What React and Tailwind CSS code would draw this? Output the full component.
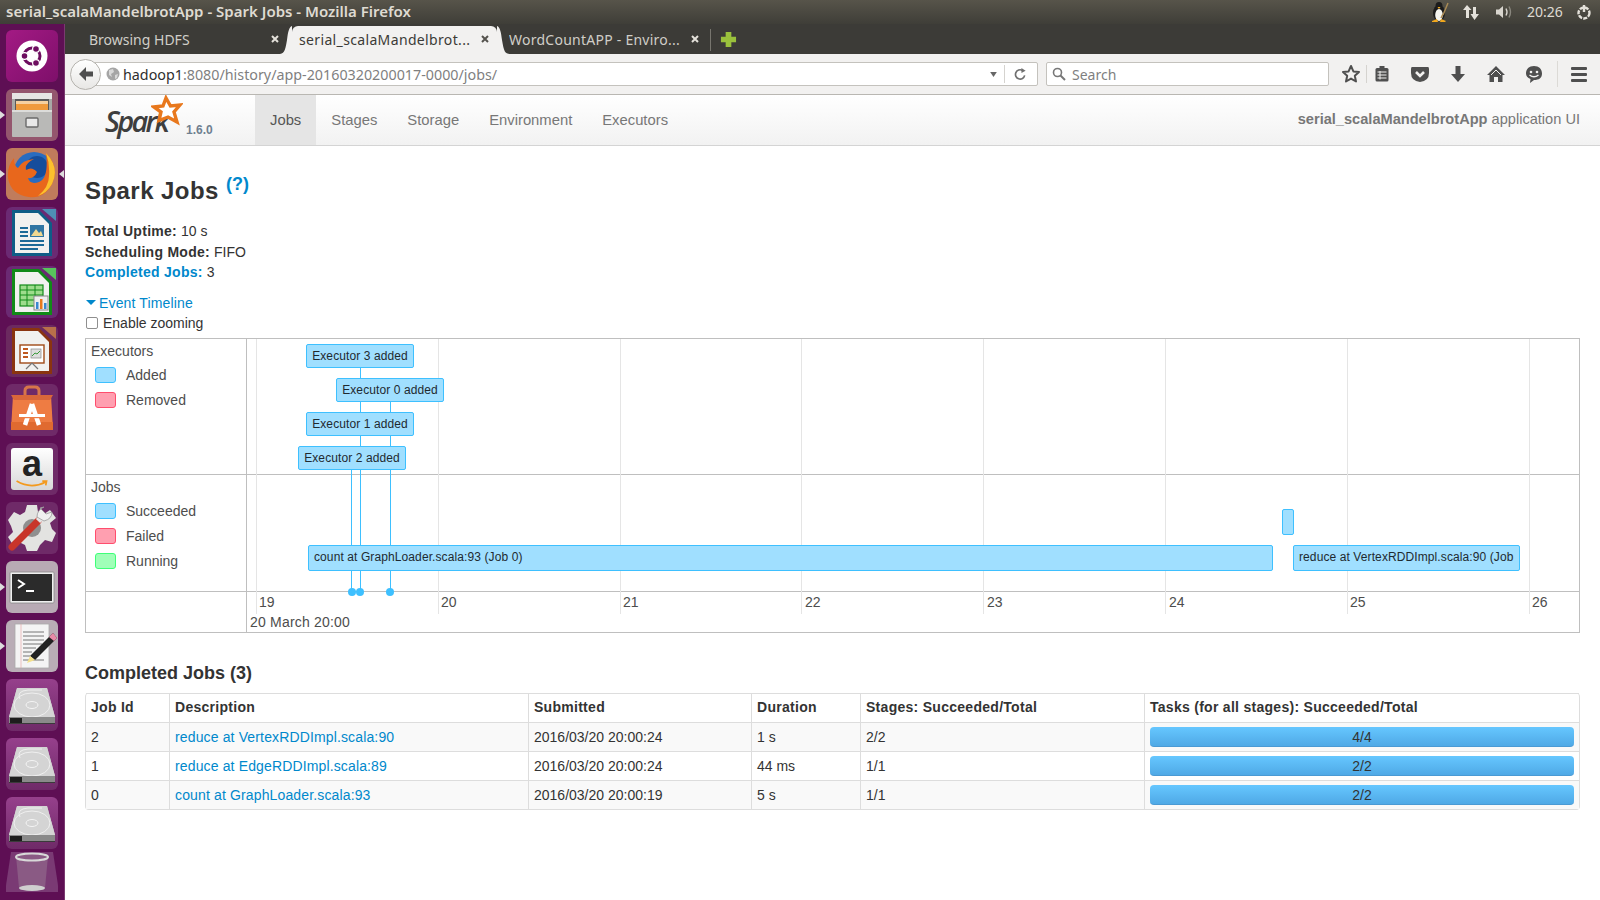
import React from "react";

const HDD = () => (
  <svg viewBox="0 0 52 52" className="w-[52px] h-[52px]">
    <path d="M11 9 L41 9 L49 38 L49 44 L3 44 L3 38 Z" fill="#cfcfcf" />
    <path d="M11 9 L41 9 L49 38 L3 38 Z" fill="#d4d4d4" />
    <ellipse cx="26" cy="26" rx="18" ry="12" fill="none" stroke="#efefef" strokeWidth="1" />
    <ellipse cx="26" cy="26" rx="6" ry="3.5" fill="none" stroke="#f4f4f4" strokeWidth="1" />
    <path d="M14 20 Q10 12 22 11 L36 11" fill="none" stroke="#efefef" strokeWidth="1" />
    <path d="M3 38 L49 38 L49 44 L3 44 Z" fill="#8a8a8a" />
    <rect x="4" y="39" width="12" height="5" fill="#1d1d1d" />
    <rect x="3" y="44" width="46" height="1" fill="#3a3a3a" />
  </svg>
);

const Tile = ({ className, children }) => (
  <div className={`w-[52px] h-[52px] rounded-[6px] overflow-hidden ${className}`}>{children}</div>
);

const Pip = () => (
  <svg viewBox="0 0 5 8" className="w-[5px] h-[8px]"><path d="M0 0 L5 4 L0 8 Z" fill="#ddd" /></svg>
);

const LauncherItem = ({ tile, left, right, children }) => (
  <div className="flex items-center h-[52px] mb-[7px]">
    <div className="w-[6px] shrink-0">{left && <Pip />}</div>
    <Tile className={tile}>{children}</Tile>
    {right && (
      <svg viewBox="0 0 5 8" className="w-[5px] h-[8px] ml-[1px]"><path d="M5 0 L0 4 L5 8 Z" fill="#ddd" /></svg>
    )}
  </div>
);

const Launcher = () => (
  <div className="w-[65px] shrink-0 bg-[#5e0f54] border-r border-[#7a3a70] pt-[6px] overflow-hidden">
    <LauncherItem tile="bg-gradient-to-br from-[#a31a84] to-[#7e0f6a]">
      <svg viewBox="0 0 52 52" className="w-full h-full">
        <circle cx="26" cy="26" r="15.5" fill="#fff" />
        <circle cx="26" cy="26" r="8" fill="none" stroke="#6d0d5f" strokeWidth="3" />
        <circle cx="18.5" cy="26" r="3.4" fill="#6d0d5f" stroke="#fff" strokeWidth="1.2" />
        <circle cx="30" cy="19" r="3.4" fill="#6d0d5f" stroke="#fff" strokeWidth="1.2" />
        <circle cx="30" cy="33" r="3.4" fill="#6d0d5f" stroke="#fff" strokeWidth="1.2" />
      </svg>
    </LauncherItem>
    <LauncherItem tile="bg-[#94566e]" left>
      <svg viewBox="0 0 52 52" className="w-full h-full">
        <rect x="6" y="4" width="40" height="44" rx="2" fill="#a8a8a6" />
        <rect x="6" y="4" width="40" height="6" fill="#e6e6e4" />
        <rect x="9" y="10" width="34" height="12" fill="#5a5a5a" />
        <rect x="10" y="12" width="32" height="3" fill="#f5d0a0" />
        <rect x="10" y="15" width="32" height="6" fill="#ef9a3c" />
        <rect x="6" y="21" width="40" height="27" rx="1" fill="#b9b9b7" />
        <rect x="6" y="21" width="40" height="2" fill="#dcdcda" />
        <rect x="20" y="29" width="12" height="9" rx="1" fill="#e8e8e8" stroke="#6a6a6a" strokeWidth="1.4" />
      </svg>
    </LauncherItem>
    <LauncherItem tile="bg-[#c07c5c]" left right>
      <svg viewBox="0 0 52 52" className="w-full h-full">
        <circle cx="28" cy="24" r="20" fill="#2a6cc0" />
        <circle cx="31" cy="19" r="11" fill="#164d9c" />
        <path d="M40 5 Q54 20 46 36 Q38 51 23 49 Q5 47 2 30 Q1 18 8 10 Q8 18 12 20 Q16 12 28 11 Q18 16 20 22 Q26 18 31 24 Q28 31 22 30 Q24 37 33 34 Q43 30 40 5 Z" fill="#e8671c" />
        <path d="M40 5 Q54 20 46 36 Q41 45 32 48 Q43 39 43 28 Q44 16 40 5 Z" fill="#fbc02d" />
      </svg>
    </LauncherItem>
    <LauncherItem tile="bg-[#6b2a73]">
      <svg viewBox="0 0 52 52" className="w-full h-full">
        <path d="M6 3 L33 3 L46 16 L46 49 L6 49 Z" fill="#0f5d87" />
        <path d="M9 6 L32 6 L43 17 L43 46 L9 46 Z" fill="#f1f1ef" />
        <path d="M36 2 L50 2 L50 14 Z" fill="#4e8fb5" />
        <rect x="14" y="20" width="8" height="2" fill="#1c6a97" />
        <rect x="14" y="24" width="8" height="2" fill="#1c6a97" />
        <rect x="14" y="28" width="8" height="2" fill="#1c6a97" />
        <rect x="24" y="18" width="14" height="12" fill="#2f75a3" />
        <path d="M25 29 L30 22 L33 26 L35 24 L37 29 Z" fill="#f0d890" />
        <rect x="14" y="33" width="24" height="2" fill="#1c6a97" />
        <rect x="14" y="37" width="24" height="2" fill="#1c6a97" />
        <rect x="14" y="41" width="18" height="2" fill="#1c6a97" />
      </svg>
    </LauncherItem>
    <LauncherItem tile="bg-[#6b2a73]">
      <svg viewBox="0 0 52 52" className="w-full h-full">
        <path d="M6 3 L33 3 L46 16 L46 49 L6 49 Z" fill="#118a18" />
        <path d="M9 6 L32 6 L43 17 L43 46 L9 46 Z" fill="#f1f1ef" />
        <path d="M36 2 L50 2 L50 14 Z" fill="#58c45c" />
        <rect x="14" y="19" width="23" height="21" fill="#9ddc8c" stroke="#118a18" strokeWidth="1.2" />
        <path d="M14 24 H37 M14 29 H37 M14 34 H37 M21 19 V40 M29 19 V40" stroke="#118a18" strokeWidth="1" />
        <rect x="28" y="30" width="14" height="14" fill="#eee" stroke="#888" strokeWidth="1" />
        <rect x="30" y="36" width="2.5" height="7" fill="#3a87d0" />
        <rect x="34" y="33" width="2.5" height="10" fill="#e8781d" />
        <rect x="38" y="37" width="2.5" height="6" fill="#3a87d0" />
      </svg>
    </LauncherItem>
    <LauncherItem tile="bg-[#6b2a5f]">
      <svg viewBox="0 0 52 52" className="w-full h-full">
        <path d="M6 3 L33 3 L46 16 L46 49 L6 49 Z" fill="#8a3410" />
        <path d="M9 6 L32 6 L43 17 L43 46 L9 46 Z" fill="#f1f1ef" />
        <path d="M36 2 L50 2 L50 14 Z" fill="#b8704a" />
        <rect x="14" y="20" width="24" height="18" fill="#fff" stroke="#a04a18" strokeWidth="1.4" />
        <path d="M17 24 H22 M17 28 H22 M17 32 H22" stroke="#c05a20" strokeWidth="2" />
        <rect x="25" y="24" width="10" height="9" fill="#ddd" stroke="#888" strokeWidth="0.7" />
        <path d="M26 31 L29 28 L31 29 L34 26" stroke="#3a9a3a" strokeWidth="1" fill="none" />
        <path d="M26 38 L20 44 M26 38 L32 44" stroke="#777" strokeWidth="1.2" />
      </svg>
    </LauncherItem>
    <LauncherItem tile="bg-[#6f2a68]">
      <svg viewBox="0 0 52 52" className="w-full h-full">
        <path d="M19 13 V7 Q19 3 23 3 H29 Q33 3 33 7 V13" fill="none" stroke="#d6754a" strokeWidth="3" />
        <path d="M7 11 L45 11 L47 46 L5 46 Z" fill="#ee7c43" />
        <path d="M5 11 H47 L44 16 H8 Z" fill="#d9673a" />
        <path d="M5 38 L47 38 L47 46 L5 46 Z" fill="#e06a30" />
        <path d="M26 20 L19 41 M26 20 L33 41" stroke="#fff" strokeWidth="4.5" />
        <rect x="13" y="30" width="26" height="3" fill="#fff" />
        <rect x="13" y="33" width="26" height="1.2" fill="#ee7c43" />
      </svg>
    </LauncherItem>
    <LauncherItem tile="bg-[#6f2a68]">
      <div className="w-[42px] h-[42px] mx-auto mt-[5px] rounded-[3px] bg-gradient-to-b from-[#fff] to-[#d8d8d8] flex flex-col items-center">
        <span className="font-['Liberation_Sans',sans-serif] font-bold text-[36px] leading-[32px] text-[#222]">a</span>
        <svg viewBox="0 0 42 10" className="w-[36px] h-[9px]"><path d="M3 1 Q20 11 37 2 M33 1 L38 1 L37 6" fill="none" stroke="#f39a1f" strokeWidth="2" /></svg>
      </div>
    </LauncherItem>
    <LauncherItem tile="bg-[#6f2a68]">
      <svg viewBox="0 0 52 52" className="w-full h-full">
        <path d="M21 3 H31 L32 10 L38 12 L44 8 L50 16 L44 21 L46 27 L50 31 L46 40 L39 38 L34 43 L31 49 H21 L19 43 L13 40 L7 43 L2 35 L7 30 L5 24 L2 18 L8 10 L14 13 L19 10 Z" fill="#e3e3e1" />
        <circle cx="26" cy="26" r="9" fill="#8f8f8f" />
        <path d="M6 45 L32 19" stroke="#c8352a" strokeWidth="7" strokeLinecap="round" />
        <path d="M32 19 L37 14" stroke="#e6e6e6" strokeWidth="6" />
        <path d="M34 6 L40 12 L46 10 Q46 17 38 19 L31 15 Q31 8 38 5 Z" fill="#f0f0f0" stroke="#9a9a9a" strokeWidth="0.8" />
      </svg>
    </LauncherItem>
    <LauncherItem tile="bg-[#b8aab4]" left>
      <svg viewBox="0 0 52 52" className="w-full h-full">
        <rect x="4" y="11" width="44" height="31" rx="1" fill="#efefef" />
        <rect x="4" y="11" width="44" height="31" rx="1" fill="none" stroke="#888" strokeWidth="0.8" />
        <rect x="6" y="13" width="40" height="27" fill="#2b2b2b" />
        <path d="M12 19 L18 23 L12 27" fill="none" stroke="#fff" strokeWidth="2" />
        <rect x="20" y="29" width="8" height="2" fill="#fff" />
      </svg>
    </LauncherItem>
    <LauncherItem tile="bg-[#b9adb6]" left>
      <svg viewBox="0 0 52 52" className="w-full h-full">
        <rect x="9" y="4" width="34" height="44" fill="#f4f4f4" stroke="#aaa" strokeWidth="0.8" />
        <path d="M15 4 V48" stroke="#e8a0a0" strokeWidth="0.6" />
        <path d="M17 12 H38 M17 16 H38 M17 20 H38 M17 24 H36 M17 28 H30 M17 32 H26 M17 36 H24 M17 40 H38" stroke="#666" strokeWidth="0.9" />
        <path d="M47 13 L51 18 L29 40 L24 36 Z" fill="#222" />
        <path d="M47 13 L51 18 L48 21 L43 17 Z" fill="#e88aa8" />
        <path d="M24 36 L29 40 L21 43 Z" fill="#f4e08a" />
      </svg>
    </LauncherItem>
    <LauncherItem tile="bg-gradient-to-b from-[#96408c] to-[#6f2a68]"><HDD /></LauncherItem>
    <LauncherItem tile="bg-gradient-to-b from-[#96408c] to-[#6f2a68]"><HDD /></LauncherItem>
    <LauncherItem tile="bg-gradient-to-b from-[#96408c] to-[#6f2a68]"><HDD /></LauncherItem>
    <div className="flex ml-[6px] -mt-[4px]">
      <svg viewBox="0 0 52 46" className="w-[52px] h-[46px]">
        <path d="M5 0 H47 L53 40 H-1 Z" fill="#7a3a74" />
        <path d="M10 4 H42 L39 36 H13 Z" fill="#8a5a84" />
        <ellipse cx="26" cy="5" rx="16" ry="3.5" fill="#8a5a84" stroke="#d8d8d8" strokeWidth="2" />
        <ellipse cx="26" cy="36" rx="13" ry="3" fill="#cfcfcf" />
      </svg>
    </div>
  </div>
);

const TitleBar = () => (
  <div className="h-6 shrink-0 flex items-center bg-gradient-to-b from-[#57544a] to-[#3f3e38] pl-[6px] text-[#dfdbd2]">
    <span className="font-['Noto_Sans',sans-serif] font-semibold text-[15px] leading-[22px] pb-[2px] flex-1">serial_scalaMandelbrotApp - Spark Jobs - Mozilla Firefox</span>
    <svg viewBox="0 0 20 22" className="w-5 h-[22px] mr-[12px]">
      <ellipse cx="9" cy="12" rx="6" ry="8" fill="#1c1c1c" />
      <ellipse cx="9" cy="5" rx="3.5" ry="4" fill="#1c1c1c" />
      <ellipse cx="9" cy="14" rx="3.8" ry="6" fill="#f5f5f0" />
      <path d="M2 20 L7 18 L8 21 L2 21 Z M11 18 L16 20 L15 21 L10 21 Z" fill="#f2a81d" />
      <path d="M7.5 6 L10.5 6 L9 8 Z" fill="#f2a81d" />
      <path d="M18 2 L13 14 M11 17 L13 13" stroke="#a98a55" strokeWidth="1.5" />
    </svg>
    <svg viewBox="0 0 18 18" className="w-[18px] h-[18px] mr-[15px]">
      <path d="M5 2 L1 7 H4 V15 H7 V7 H9.5 Z" fill="#e4e1da" />
      <path d="M12.5 17 L17 11 H14 V4 H11 V11 H8.5 Z" fill="#e4e1da" />
    </svg>
    <svg viewBox="0 0 20 18" className="w-5 h-[18px] mr-[12px]">
      <path d="M1 6.5 H4 L8 3 V15 L4 11.5 H1 Z" fill="#d8d5ce" />
      <path d="M11 5.5 Q13 9 11 12.5" fill="none" stroke="#d8d5ce" strokeWidth="1.4" />
      <path d="M14 3.5 Q17 9 14 14.5" fill="none" stroke="#8a887f" strokeWidth="1.4" />
    </svg>
    <span className="font-['Noto_Sans',sans-serif] text-[14px] leading-6 w-[36px] text-[#dfdbd2] mr-[12px]">20:26</span>
    <svg viewBox="0 0 18 18" className="w-[18px] h-[18px] mr-[7px]">
      <circle cx="9" cy="10" r="5.5" fill="none" stroke="#e4e1da" strokeWidth="2.4" strokeDasharray="4 1.2" />
      <path d="M9 2 V9" stroke="#e4e1da" strokeWidth="2.4" />
    </svg>
  </div>
);

const X = ({ className }) => (
  <svg viewBox="0 0 10 10" className={`w-[10px] h-[10px] ${className}`}><path d="M2 2 L8 8 M8 2 L2 8" stroke="currentColor" strokeWidth="2" /></svg>
);

const TabBar = () => (
  <div className="h-[30px] shrink-0 bg-[#3c3b37] flex items-end font-['Noto_Sans',sans-serif] text-[14px]">
    <div className="w-[227px] h-[28px] flex items-center pl-6 pr-[12px] pb-[2px] text-[#d0cec8]">
      <span className="flex-1">Browsing HDFS</span>
      <X className="text-[#e4e1da]" />
    </div>
    <div className="w-[205px] h-[28px] flex items-center pl-[7px] pr-[7px] pb-[2px] text-[#3c3b37] bg-[#f2f1f0] rounded-t-[6px] relative">
      <svg viewBox="0 0 14 28" className="absolute -left-[14px] bottom-0 w-[14px] h-[28px]">
        <path d="M14 0 V28 H0 C6 28 7 26 9 14 C10 6 11 1 14 0 Z" fill="#f2f1f0" />
      </svg>
      <svg viewBox="0 0 14 28" className="absolute -right-[14px] bottom-0 w-[14px] h-[28px]">
        <path d="M0 0 V28 H14 C8 28 7 26 5 14 C4 6 3 1 0 0 Z" fill="#f2f1f0" />
      </svg>
      <span className="flex-1 whitespace-nowrap overflow-hidden tracking-[0.35px]">serial_scalaMandelbrot...</span>
      <X className="text-[#55534e]" />
    </div>
    <div className="w-[213px] h-[28px] flex items-center pl-[12px] pr-[10px] pb-[2px] text-[#d0cec8]">
      <span className="flex-1 whitespace-nowrap overflow-hidden tracking-[0.25px]">WordCountAPP - Enviro...</span>
      <X className="text-[#e4e1da]" />
    </div>
    <div className="w-px h-[22px] bg-[#77756e] mb-[3px]" />
    <svg viewBox="0 0 18 18" className="w-[17px] h-[17px] ml-[9px] mb-[6px]">
      <path d="M6 1 H12 V6 H17 V12 H12 V17 H6 V12 H1 V6 H6 Z" fill="#9ac13c" />
    </svg>
  </div>
);

const G = ({ d, w = "w-[38px]", children }) => (
  <div className={`${w} h-6 flex items-center justify-center`}>
    <svg viewBox="0 0 20 20" className="w-5 h-5">{children || <path d={d} fill="#4f4f4f" />}</svg>
  </div>
);

const Toolbar = () => (
  <div className="h-[41px] shrink-0 bg-[#f2f1f0] border-b border-[#b9b7b2] flex items-center pl-[5px] font-['Noto_Sans',sans-serif] text-[14px]">
    <div className="w-[31px] h-[31px] shrink-0 rounded-full border border-[#b5b3ae] bg-gradient-to-b from-[#fff] to-[#e8e7e5] flex items-center justify-center z-10">
      <svg viewBox="0 0 18 18" className="w-[18px] h-[18px]"><path d="M2 9 L9 2 L9 6.5 H16 V11.5 H9 V16 Z" fill="#4f4f4f" /></svg>
    </div>
    <div className="w-[953px] -ml-[16px] h-6 shrink-0 bg-white border border-[#c4c2bd] rounded-[2px] flex items-center pl-[20px] pr-[8px]">
      <svg viewBox="0 0 14 14" className="w-[14px] h-[14px] mr-[3px]">
        <circle cx="7" cy="7" r="6.5" fill="#a5a5a5" />
        <path d="M3 3 L7 2 L8 5 L5 7 L6 10 L3 8 Z M9 8 L12 7 L11 11 L9 12 Z" fill="#d8d8d8" />
      </svg>
      <span className="flex-1 text-[14.3px] pt-[1px] whitespace-nowrap text-[#2e2e2e]">hadoop1<span className="text-[#7f7f7f]">:8080/history/app-20160320200017-0000/jobs/</span></span>
      <svg viewBox="0 0 8 6" className="w-[7px] h-[5px] mr-[7px]"><path d="M0 0 H8 L4 6 Z" fill="#666" /></svg>
      <div className="w-px h-[18px] bg-[#d5d3cf] mr-[9px]" />
      <svg viewBox="0 0 14 14" className="w-[13px] h-[13px] mr-[2px]">
        <path d="M11.5 8 A5 5 0 1 1 9 2.5" fill="none" stroke="#6f6f6f" strokeWidth="1.8" />
        <path d="M8 0 L12.5 3 L8 5.5 Z" fill="#6f6f6f" />
      </svg>
    </div>
    <div className="w-[283px] ml-[8px] h-6 shrink-0 bg-white border border-[#c4c2bd] rounded-[2px] flex items-center pl-[5px] text-[#7f7f7f]">
      <svg viewBox="0 0 14 14" className="w-[14px] h-[14px] mr-[6px]">
        <circle cx="5.5" cy="5.5" r="4" fill="none" stroke="#777" strokeWidth="1.6" />
        <path d="M8.5 8.5 L13 13" stroke="#777" strokeWidth="2" />
      </svg>
      <span>Search</span>
    </div>
    <div className="ml-[7px] flex items-center">
      <G w="w-[30px]">
        <path d="M10 2 L12.4 7.4 L18 8 L13.8 11.8 L15 17.5 L10 14.6 L5 17.5 L6.2 11.8 L2 8 L7.6 7.4 Z" fill="none" stroke="#4f4f4f" strokeWidth="2" strokeLinejoin="round" />
      </G>
      <div className="w-px h-[18px] bg-[#d5d3cf]" />
      <G w="w-[30px]">
        <rect x="3.5" y="4" width="13" height="13.5" rx="1.5" fill="#4f4f4f" />
        <rect x="7.5" y="2" width="5" height="3.5" fill="#4f4f4f" />
        <path d="M5.5 8 H14.5 M5.5 11 H14.5 M5.5 14 H14.5 M8 7 V15.5" stroke="#f2f1f0" strokeWidth="1" />
      </G>
      <div className="w-1" />
      <G>
        <path d="M2 3 H18 Q19 3 19 5 V9 Q19 17 10 18 Q1 17 1 9 V5 Q1 3 2 3 Z" fill="#4f4f4f" />
        <path d="M6 8 L10 12 L14 8" fill="none" stroke="#f2f1f0" strokeWidth="2.6" />
      </G>
      <G d="M7.5 2 H12.5 V10 H17 L10 18 L3 10 H7.5 Z" />
      <G>
        <path d="M10 2 L19 11 H16.5 V18 H12 V13 H8 V18 H3.5 V11 H1 Z" fill="#4f4f4f" />
        <path d="M10 6 L15 11" stroke="#f2f1f0" strokeWidth="1" />
        <path d="M10 6 L5 11" stroke="#f2f1f0" strokeWidth="1" />
      </G>
      <G>
        <path d="M10 2 C15 2 18 5 18 9.5 C18 14 15 16 10 16 L6 19 L6.5 15 C3.5 14 2 12 2 9.5 C2 5 5 2 10 2 Z" fill="#4f4f4f" />
        <circle cx="7" cy="8" r="1.3" fill="#f2f1f0" />
        <circle cx="13" cy="8" r="1.3" fill="#f2f1f0" />
        <path d="M5.5 11 Q10 14.5 14.5 11" fill="none" stroke="#f2f1f0" strokeWidth="1.4" />
      </G>
      <div className="w-1" />
      <div className="w-px h-[26px] bg-[#dcdad6]" />
      <div className="w-[42px] flex flex-col items-center gap-[3px]">
        <div className="w-4 h-[3px] bg-[#4f4f4f] rounded-[1px]" />
        <div className="w-4 h-[3px] bg-[#4f4f4f] rounded-[1px]" />
        <div className="w-4 h-[3px] bg-[#4f4f4f] rounded-[1px]" />
      </div>
    </div>
  </div>
);

const NavBar = () => (
  <div className="h-[51px] shrink-0 bg-gradient-to-b from-[#ffffff] to-[#f2f2f2] border-b border-[#d4d4d4] flex items-stretch text-[14.8px] text-[#777]">
    <div className="w-[190px] pl-[40px] flex items-end pb-[6px] relative">
      <span className="font-['Open_Sans',sans-serif] italic font-semibold text-[#3e3e3e] text-[29px] leading-[36px] tracking-[-2.8px]">Spark</span>
      <svg viewBox="0 0 32 32" className="absolute left-[86px] top-0 w-8 h-8">
        <path d="M15 3 L19.5 11 L29 10 L23 17 L26 27 L17 22 L8 25.5 L10 17 L3 12 L12 11 Z" fill="#fff" stroke="#e8781d" strokeWidth="3.4" />
      </svg>
      <span className="ml-[19px] font-bold text-[12px] leading-[18px] text-[#6f7f90]">1.6.0</span>
    </div>
    <div className="flex items-center px-[15px] bg-[#e5e5e5] text-[#555]">Jobs</div>
    <div className="flex items-center px-[15px]">Stages</div>
    <div className="flex items-center px-[15px]">Storage</div>
    <div className="flex items-center px-[15px]">Environment</div>
    <div className="flex items-center px-[15px]">Executors</div>
    <div className="flex-1" />
    <div className="flex items-center pr-[20px] text-[14.6px]"><b>serial_scalaMandelbrotApp</b>&nbsp;application UI</div>
  </div>
);

const Legend = ({ title, items }) => (
  <div className="pt-[2px] pl-[5px]">
    <div className="leading-[20px]">{title}</div>
    <div className="mt-[6px] flex flex-col gap-[9px]">
      {items.map(([label, cls]) => (
        <div key={label} className="flex items-center h-4 pl-[4px]">
          <div className={`w-[21px] h-[16px] rounded-[3px] border ${cls}`} />
          <span className="ml-[10px] pt-[2px]">{label}</span>
        </div>
      ))}
    </div>
  </div>
);

const exec = "absolute w-[108px] h-6 bg-[#a0dfff] border border-[#3ec0ff] rounded-[2px] text-[12px] leading-[22px] tracking-[0.1px] text-center text-[#1f2a30] whitespace-nowrap";
const job = "absolute top-[206px] h-[26px] bg-[#a0dfff] border border-[#3ec0ff] rounded-[2px] text-[12px] leading-[23px] tracking-[0.1px] pl-[5px] text-[#1f2a30] whitespace-nowrap overflow-hidden";
const grid = "absolute top-0 w-px h-[275px] bg-[#e5e5e5]";
const tick = "absolute top-[253px] leading-[20px]";
const evline = "absolute w-px bg-[#3ec0ff]";
const dot = "absolute top-[249px] w-2 h-2 rounded-full bg-[#3ec0ff]";

const Timeline = () => (
  <div className="mt-[5px] h-[295px] border border-[#bfbfbf] relative grid grid-cols-[161px_1fr] grid-rows-[136px_117px_1fr] text-[14px] text-[#4d4d4d] overflow-hidden">
    <div className="border-r border-b border-[#bfbfbf]">
      <Legend title="Executors" items={[["Added", "bg-[#a0dfff] border-[#3ec0ff]"], ["Removed", "bg-[#ff9fb0] border-[#ff4d6d]"]]} />
    </div>
    <div className="border-b border-[#bfbfbf]" />
    <div className="border-r border-b border-[#bfbfbf]">
      <Legend title="Jobs" items={[["Succeeded", "bg-[#a0dfff] border-[#3ec0ff]"], ["Failed", "bg-[#ff9fb0] border-[#ff4d6d]"], ["Running", "bg-[#a0ffb8] border-[#3eff78]"]]} />
    </div>
    <div className="border-b border-[#bfbfbf]" />
    <div className="border-r border-[#bfbfbf]" />
    <div />

    <div className={`${grid} left-[170px]`} />
    <div className={`${grid} left-[352px]`} />
    <div className={`${grid} left-[534px]`} />
    <div className={`${grid} left-[715px]`} />
    <div className={`${grid} left-[897px]`} />
    <div className={`${grid} left-[1079px]`} />
    <div className={`${grid} left-[1261px]`} />
    <div className={`${grid} left-[1443px]`} />

    <div className={`${tick} left-[173px]`}>19</div>
    <div className={`${tick} left-[355px]`}>20</div>
    <div className={`${tick} left-[537px]`}>21</div>
    <div className={`${tick} left-[719px]`}>22</div>
    <div className={`${tick} left-[901px]`}>23</div>
    <div className={`${tick} left-[1083px]`}>24</div>
    <div className={`${tick} left-[1264px]`}>25</div>
    <div className={`${tick} left-[1446px]`}>26</div>
    <div className="absolute left-[164px] top-[273px] leading-[20px] tracking-[0.2px]">20 March 20:00</div>

    <div className={`${evline} left-[274px] top-[29px] h-[224px]`} />
    <div className={`${evline} left-[304px] top-[63px] h-[190px]`} />
    <div className={`${evline} left-[265px] top-[131px] h-[122px]`} />
    <div className={`${dot} left-[262px]`} />
    <div className={`${dot} left-[270px]`} />
    <div className={`${dot} left-[300px]`} />

    <div className={`${exec} left-[220px] top-[5px]`}>Executor 3 added</div>
    <div className={`${exec} left-[250px] top-[39px]`}>Executor 0 added</div>
    <div className={`${exec} left-[220px] top-[73px]`}>Executor 1 added</div>
    <div className={`${exec} left-[212px] top-[107px]`}>Executor 2 added</div>

    <div className={`${job} left-[222px] w-[965px]`}>count at GraphLoader.scala:93 (Job 0)</div>
    <div className="absolute left-[1196px] top-[170px] w-3 h-[26px] bg-[#a0dfff] border border-[#3ec0ff] rounded-[2px]" />
    <div className={`${job} left-[1207px] w-[227px]`}>reduce at VertexRDDImpl.scala:90 (Job</div>
  </div>
);

const rows = [
  ["2", "reduce at VertexRDDImpl.scala:90", "2016/03/20 20:00:24", "1 s", "2/2", "4/4", "bg-[#f9f9f9]"],
  ["1", "reduce at EdgeRDDImpl.scala:89", "2016/03/20 20:00:24", "44 ms", "1/1", "2/2", "bg-white"],
  ["0", "count at GraphLoader.scala:93", "2016/03/20 20:00:19", "5 s", "1/1", "2/2", "bg-[#f9f9f9]"],
];

const td = "h-[29px] px-[5px] py-0 border-t border-l border-[#ddd] text-left align-middle first:border-l-0";
const tc = `${td} pt-[2px]`;

const JobsTable = () => (
  <table className="w-full table-fixed border-separate border-spacing-0 border-x border-b border-[#ddd] rounded-[4px] text-[14px] text-[#333]">
    <colgroup>
      <col className="w-[83px]" />
      <col className="w-[359px]" />
      <col className="w-[223px]" />
      <col className="w-[109px]" />
      <col className="w-[284px]" />
      <col />
    </colgroup>
    <thead>
      <tr>
        {["Job Id", "Description", "Submitted", "Duration", "Stages: Succeeded/Total", "Tasks (for all stages): Succeeded/Total"].map((h) => (
          <th key={h} className={`${td} font-bold tracking-[0.28px]`}>{h}</th>
        ))}
      </tr>
    </thead>
    <tbody>
      {rows.map((r) => (
        <tr key={r[0]} className={r[6]}>
          <td className={tc}>{r[0]}</td>
          <td className={tc}><span className="text-[#0088cc] tracking-[0.14px]">{r[1]}</span></td>
          <td className={tc}>{r[2]}</td>
          <td className={tc}>{r[3]}</td>
          <td className={tc}>{r[4]}</td>
          <td className={td}>
            <div className="h-5 rounded-[4px] bg-gradient-to-b from-[#66c7ff] to-[#4fa9e6] border-b border-[#4a9ad4] text-center leading-[20px]">{r[5]}</div>
          </td>
        </tr>
      ))}
    </tbody>
  </table>
);

const Page = () => (
  <div className="flex-1 min-h-0 bg-white overflow-hidden font-['Liberation_Sans',Arial,sans-serif]">
    <NavBar />
    <div className="px-5 text-[14px] text-[#333]">
      <h3 className="mt-[25px] text-[24px] leading-[40px] font-bold tracking-[0.45px]">
        Spark Jobs <a className="text-[18px] leading-none tracking-normal text-[#0088cc] align-[9px]">(?)</a>
      </h3>
      <div className="mt-[10px] leading-[20.5px]">
        <div><b className="tracking-[0.28px]">Total Uptime:</b> 10 s</div>
        <div><b className="tracking-[0.28px]">Scheduling Mode:</b> FIFO</div>
        <div><b className="text-[#0088cc] tracking-[0.28px]">Completed Jobs:</b> 3</div>
      </div>
      <div className="mt-[10px] leading-[20px] flex items-center text-[#0088cc] tracking-[0.15px]">
        <svg viewBox="0 0 10 5" className="w-[10px] h-[5px] ml-[1px] mr-[3px]"><path d="M0 0 H10 L5 5 Z" fill="#0088cc" /></svg>
        Event Timeline
      </div>
      <div className="h-5 pt-[1px] leading-[20px] flex items-center">
        <div className="w-[12px] h-[12px] ml-[1px] mr-[5px] border border-[#8f8f8f] rounded-[2px] bg-white" />
        Enable zooming
      </div>
      <Timeline />
      <h4 className="mt-[25px] mb-[5px] text-[18px] leading-[30px] font-bold">Completed Jobs (3)</h4>
      <JobsTable />
    </div>
  </div>
);

export default function App() {
  return (
    <div className="w-[1600px] h-[900px] overflow-hidden flex flex-col">
      <TitleBar />
      <div className="flex-1 min-h-0 flex">
        <Launcher />
        <div className="flex-1 min-w-0 flex flex-col">
          <TabBar />
          <Toolbar />
          <Page />
        </div>
      </div>
    </div>
  );
}
